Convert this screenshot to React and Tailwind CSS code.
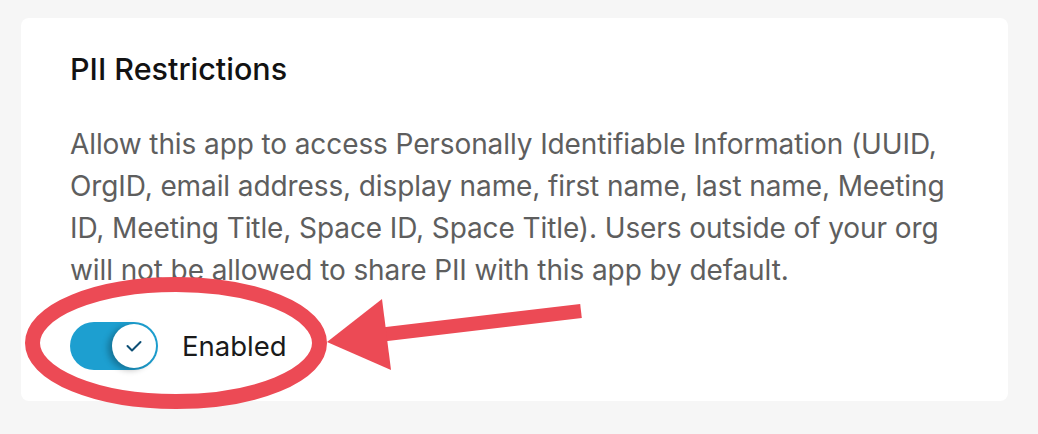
import React from 'react';

function Toggle() {
  return (
    <div className="relative flex h-[48px] w-[88px] shrink-0 items-center justify-end rounded-full bg-[#1d9fd0] p-[2px]">
      <div className="flex h-[44px] w-[44px] items-center justify-center rounded-full bg-white shadow-[-4px_2px_6px_rgba(0,0,0,0.28)]">
        <svg width="18" height="14" viewBox="0 0 18 14" fill="none">
          <path d="M2.5 7l4.5 4.5L15.5 3" stroke="#0d4f75" strokeWidth="2" strokeLinecap="round" strokeLinejoin="round" />
        </svg>
      </div>
    </div>
  );
}

export default function App() {
  return (
    <div className="relative min-h-[434px] bg-[#f6f6f6] pl-[21px] pt-[18px] font-['Inter',sans-serif]">
      <div className="w-[987px] rounded-[8px] bg-white pb-[31px] pl-[49px] pr-[40px] pt-[33px]">
        <h2 className="text-[30.5px] font-medium leading-[36px] text-[#121212]">PII Restrictions</h2>
        <p className="mt-[36px] max-w-[890px] text-[28px] leading-[42px] tracking-[-0.1px] text-[#5e5e5e]">
          Allow this app to access Personally Identifiable Information (UUID, OrgID, email address, display name, first name, last name, Meeting ID, Meeting Title, Space ID, Space Title). Users outside of your org will not be allowed to share PII with this app by default.
        </p>
        <div className="mt-[31px] flex items-center gap-[24px]">
          <Toggle />
          <span className="text-[27.5px] leading-[34px] text-[#1a1a1a]">Enabled</span>
        </div>
      </div>

      {/* annotation drawn over the card */}
      <svg className="pointer-events-none absolute left-0 top-0" width="1038" height="434" viewBox="0 0 1038 434">
        <ellipse cx="176" cy="343" rx="143.5" ry="58.5" fill="none" stroke="#ec4a55" strokeWidth="15" />
        <line x1="370" y1="336" x2="581" y2="311" stroke="#ec4a55" strokeWidth="14" />
        <polygon points="327,342 382,299 391,370" fill="#ec4a55" />
      </svg>
    </div>
  );
}
